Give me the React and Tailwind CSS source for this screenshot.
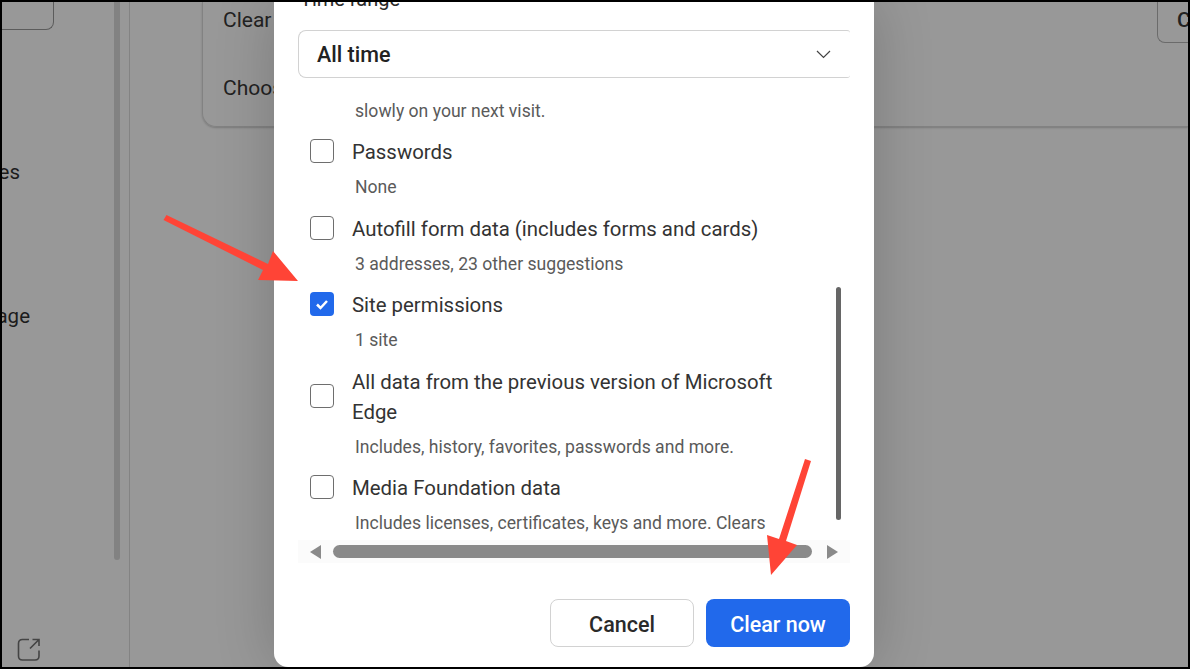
import React from 'react';

const rows = [
  { label: 'Passwords', sub: 'None' },
  { label: 'Autofill form data (includes forms and cards)', sub: '3 addresses, 23 other suggestions' },
  { label: 'Site permissions', sub: '1 site', checked: true },
  { label: 'All data from the previous version of Microsoft Edge', sub: 'Includes, history, favorites, passwords and more.' },
  { label: 'Media Foundation data', sub: 'Includes licenses, certificates, keys and more. Clears' },
];

function Row({ label, sub, checked }) {
  return (
    <div>
      <div className="flex items-center">
        <div className="w-[54px] shrink-0 pl-[12px]">
          {checked ? (
            <div className="w-[24px] h-[24px] rounded-[4px] bg-[#2169eb] flex items-center justify-center">
              <svg width="14" height="11" viewBox="0 0 14 11" fill="none">
                <path d="M2 5.5 L5.5 9 L12 2" stroke="white" strokeWidth="2.5" />
              </svg>
            </div>
          ) : (
            <div className="w-[24px] h-[24px] rounded-[4px] border border-[#6e6e6e]" />
          )}
        </div>
        <div className="w-[450px] text-[20.4px] leading-[30px] pt-[1px] -mb-[1px] text-[#333]">{label}</div>
      </div>
      <div className="mt-[6px] ml-[57px] w-[430px] text-[17.6px] leading-[30px] text-[#5a5a5a]">{sub}</div>
    </div>
  );
}

export default function App() {
  return (
    <div className="w-[1190px] h-[669px] bg-black p-[2px] overflow-hidden font-['Roboto',sans-serif]">
      <div className="relative w-full h-full bg-[#989898] overflow-hidden flex">
        {/* settings page behind the dialog */}
        <aside className="relative w-[128px] h-full shrink-0 border-r border-[#838383] flex flex-col">
          <div className="w-[52px] h-[28px] border-r border-b border-[#5c5c5c] rounded-br-lg" />
          <div className="mt-[128px] w-[18px] flex justify-end overflow-hidden whitespace-nowrap text-[20.5px] leading-[28px] text-[#1c1c1c]">
            services
          </div>
          <div className="mt-[116px] w-[28px] flex justify-end overflow-hidden whitespace-nowrap text-[20.5px] leading-[28px] text-[#1c1c1c]">
            Manage
          </div>
          <div className="mt-auto mb-[6px] ml-[15px]">
            <svg width="24" height="24" viewBox="0 0 24 24" fill="none" stroke="#444" strokeWidth="1.6">
              <path d="M12 2.5 H5.5 Q1.5 2.5 1.5 6.5 V19 Q1.5 23 5.5 23 H18 Q22 23 22 19 V13.5" />
              <path d="M13 11.5 L21.5 3 M15.5 2.5 H22 V9" />
            </svg>
          </div>
          <div className="absolute left-[112px] top-0 w-[6px] h-[558px] rounded-b-[3px] bg-[#828282]" />
        </aside>

        <main className="flex-1 min-w-0 pl-[72px]">
          <div className="h-[125px] rounded-bl-[14px] border-l border-b border-[#828282] shadow-[0_1px_2px_rgba(0,0,0,0.2)] pl-[20px] overflow-hidden">
            <div className="-mt-[3px] h-[44px] flex items-center justify-between text-[21px] text-[#222]">
              <span>Clear browsing data now</span>
              <div className="w-[31px] h-[44px] border-l border-b border-[#6b6b6b] rounded-bl-lg pl-[19px] flex items-center font-medium overflow-hidden">
                Choose
              </div>
            </div>
            <div className="mt-[24px] h-[44px] flex items-center text-[21px] text-[#222] whitespace-nowrap">
              Choose what to clear every time you close the browser
            </div>
          </div>
        </main>

        {/* dialog */}
        <div className="absolute left-[272px] top-0 bottom-0 w-[600px] bg-white rounded-b-[14px] px-[24px] shadow-[0_0_60px_rgba(0,0,0,0.2)] flex flex-col overflow-hidden">
          <div className="-mt-[18px] h-[46px] shrink-0 flex items-start text-[20px] leading-[30px] text-[#2a2a2a] pl-[2px]">Time range</div>
          <div className="h-[48px] shrink-0 border border-[#d2d2d2] rounded-l-lg rounded-r-[3px] border-r-0 flex items-center justify-between pl-[18px] pr-[19px]">
            <span className="text-[21.5px] font-medium text-[#222] pt-[3px]">All time</span>
            <svg width="15" height="9" viewBox="0 0 15 9" fill="none" stroke="#444" strokeWidth="1.2">
              <path d="M1 1 L7.5 7.5 L14 1" />
            </svg>
          </div>

          <div className="relative h-[462px] shrink-0 overflow-hidden pt-[18px]">
            <div className="ml-[57px] text-[17.6px] leading-[30px] text-[#5a5a5a]">slowly on your next visit.</div>
            <div className="mt-[10px] flex flex-col gap-[10.5px]">
              {rows.map((r) => (
                <Row key={r.label} {...r} />
              ))}
            </div>
            <div className="absolute left-[538px] top-[209px] w-[5px] h-[233px] rounded-[3px] bg-[#666]" />
          </div>

          <div className="h-[23px] shrink-0 bg-[#fbfbfb] flex items-center justify-between pl-[12px] pr-[12px]">
            <svg width="11" height="14" viewBox="0 0 11 14"><path d="M11 0 V14 L0 7 Z" fill="#8a8a8a" /></svg>
            <div className="w-[479px] h-[13px] rounded-full bg-[#8a8a8a] ml-[12px] mr-[15px]" />
            <svg width="11" height="14" viewBox="0 0 11 14"><path d="M0 0 V14 L11 7 Z" fill="#8a8a8a" /></svg>
          </div>

          <div className="mt-[36px] flex justify-end gap-[12px]">
            <button className="w-[144px] h-[48px] rounded-lg border border-[#d2d2d2] bg-white text-[21.5px] font-medium text-[#2a2a2a] pt-[4px]">Cancel</button>
            <button className="w-[144px] h-[48px] rounded-lg bg-[#2169eb] text-[21.5px] font-medium text-white pt-[4px]">Clear now</button>
          </div>
        </div>

        {/* annotation arrows */}
        <svg className="absolute left-[-2px] top-[-2px] pointer-events-none" width="1190" height="669" fill="#ff4436">
          <path d="M163.5 220 L166.5 215 L268 264 L273 251 L298 281 L258 280 L263 270 Z" />
          <path d="M805 459 L811 461 L786 541 L797 545 L771 575 L767 535 L779 539 Z" />
        </svg>
      </div>
    </div>
  );
}
